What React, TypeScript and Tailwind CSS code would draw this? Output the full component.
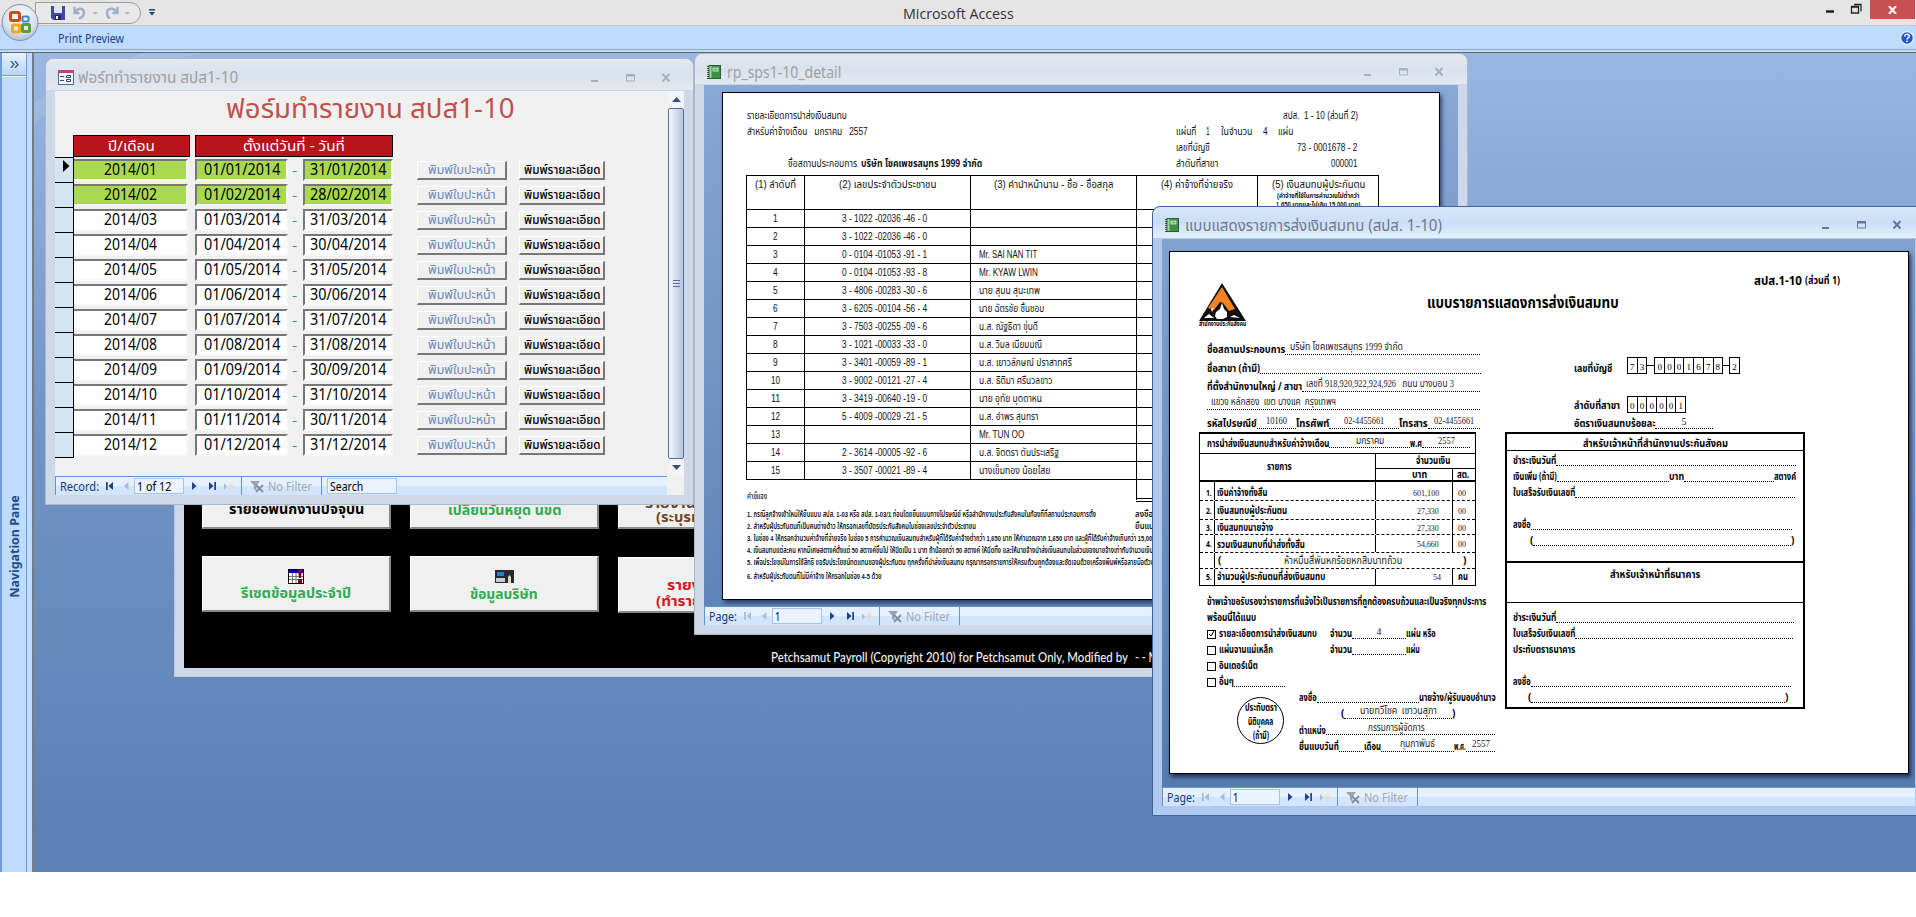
import React, { useLayoutEffect, useRef } from "react";

type Kids = { children?: React.ReactNode; className?: string };

/* Single line of text stretched or condensed to its box's width. */
function Fit({ children, className = "" }: Kids) {
  const inner = useRef<HTMLSpanElement>(null);
  useLayoutEffect(() => {
    const el = inner.current;
    if (!el || !el.parentElement) return;
    const natural = el.offsetWidth;
    const target = el.parentElement.clientWidth;
    if (natural > 0) el.style.transform = `scaleX(${target / natural})`;
  }, [children]);
  return (
    <span className={`flex shrink-0 whitespace-pre leading-none ${className}`}>
      <span ref={inner} className="inline-block shrink-0 origin-left">
        {children}
      </span>
    </span>
  );
}

function Row({ children, className = "h-4" }: Kids) {
  return <div className={`flex shrink-0 items-center ${className}`}>{children}</div>;
}

function Dots({ children, className = "flex-1" }: Kids) {
  return (
    <span
      className={`flex h-[9px] shrink-0 items-center justify-center border-b-[1.500px] border-dotted border-black pb-[5px] font-['Liberation_Serif','Noto_Sans_Thai',serif] text-[10px] font-normal text-[#222] ${className}`}
    >
      {children}
    </span>
  );
}

function WindowButtons({ color }: { color: string }) {
  return (
    <svg width="82" height="14" viewBox="0 0 82 14" fill="none" stroke={color}>
      <path d="M1 10h7" strokeWidth="2" />
      <path d="M36.500 3.500h8v6.500h-8z" />
      <path d="M36 4.500h9" strokeWidth="2" />
      <path d="M72.500 3l7 7.500M79.500 3l-7 7.500" strokeWidth="2" />
    </svg>
  );
}

function ReportIcon() {
  return (
    <svg width="14" height="14" viewBox="0 0 14 14" className="shrink-0">
      <rect x="2" y="0.500" width="11.500" height="13" fill="#3f9148" stroke="#285f31" />
      <rect x="2.500" y="1" width="2" height="12" fill="#9fd39b" />
      <rect x="6" y="3" width="5" height="3" fill="#6fb873" stroke="#d5efd0" strokeWidth=".8" />
      <path d="M1 1v13" stroke="#222" strokeWidth="1.500" strokeDasharray="1 1" />
    </svg>
  );
}

function FormIcon() {
  return (
    <svg width="16" height="15" viewBox="0 0 16 15" className="shrink-0">
      <rect x="0.500" y="0.500" width="15" height="14" fill="#f5f8fd" stroke="#50699c" />
      <rect x="0" y="0" width="16" height="3" fill="#b4476b" />
      <path d="M2 6.500h4M2 10.500h4M8.500 5.500h4v2h-4zM8.500 9.500h4v2h-4z" fill="none" stroke="#31456f" />
    </svg>
  );
}

function NavBar({ record = false }: { record?: boolean }) {
  const start = record ? "#1f3f7f" : "#a9bbd8";
  return (
    <div className="flex h-[19px] w-full shrink-0 items-center border-t border-l border-[#6593cf] bg-linear-to-b from-[#e6f1ff] from-50% to-[#d3e5fd] to-50% pl-1 text-[13px] text-[#15397f]">
      {record ? <Fit className="w-[39px]">Record:</Fit> : <Fit className="w-[28px]">Page:</Fit>}
      <svg width="7" height="8" className="ml-[7px]" fill={start}>
        <path d="M0 0h1.700v8H0zM7 0v8L2.500 4z" />
      </svg>
      <svg width="5" height="8" className="ml-[11px]" fill="#a9bbd8">
        <path d="M4.500 0v8L0 4z" />
      </svg>
      <div className="ml-[5px] flex h-[16px] w-[50px] items-center border border-[#a8c3ea] bg-[#eaf3ff] pl-[2px] text-black">
        {record ? <Fit className="w-[34px]">1 of 12</Fit> : <Fit className="w-[5px]">1</Fit>}
      </div>
      <svg width="5" height="8" className="ml-2" fill="#1f3f8f">
        <path d="M0 0v8l4.500-4z" />
      </svg>
      <svg width="7" height="8" className="ml-3" fill="#1f3f8f">
        <path d="M0 0v8l4.500-4zM5.300 0H7v8H5.300z" />
      </svg>
      <svg width="11" height="9" className="ml-2">
        <path d="M0 1v7l3-3.500z" fill="#a9bbd8" />
        <path d="M7 0v9M3.500 4.500h7M4.500 2l5 5M9.500 2l-5 5" stroke="#e4dfbd" />
      </svg>
      <div className="ml-[6px] h-full w-px bg-[#6593cf]" />
      <svg width="14" height="13" viewBox="0 0 14 13" className="ml-[8px]">
        <path d="M0 1h10L6.500 5.500V11L4 9V5.500z" fill="#9aa3b1" />
        <path d="M6 5l7 7M13 5l-7 7" stroke="#848d9c" strokeWidth="1.800" />
      </svg>
      <Fit className="ml-1 w-[44px] text-[#a3a9ad]">No Filter</Fit>
      <div className="ml-[9px] h-full w-px bg-[#6593cf]" />
      {record && (
        <div className="ml-[5px] flex h-[16px] w-[70px] items-center border border-[#a8c3ea] bg-[#eaf3ff] pl-[2px] text-black">
          <Fit className="w-[33px]">Search</Fit>
        </div>
      )}
    </div>
  );
}

function OfficeButton() {
  return (
    <svg width="40" height="42" viewBox="0 0 40 42" className="absolute top-0 left-0 z-10">
      <defs>
        <radialGradient id="orb" cx=".5" cy=".35" r=".7">
          <stop offset="0" stopColor="#ffffff" />
          <stop offset=".6" stopColor="#dbe2ec" />
          <stop offset="1" stopColor="#a9b7ca" />
        </radialGradient>
      </defs>
      <circle cx="20" cy="22.500" r="18" fill="url(#orb)" stroke="#8292ab" />
      <g fill="none" strokeWidth="3">
        <rect x="10.500" y="12.500" width="9" height="8" rx="1.500" stroke="#d9481c" />
        <rect x="22.500" y="16.500" width="6" height="5" rx="1" stroke="#3b8ecb" strokeWidth="2.200" />
        <rect x="12.500" y="25" width="7" height="7" rx="1" stroke="#f3a91f" />
        <rect x="22.500" y="24.500" width="7" height="7" rx="1" stroke="#56a03c" />
      </g>
    </svg>
  );
}

const months = [
  ["2014/01", "01/01/2014", "31/01/2014"],
  ["2014/02", "01/02/2014", "28/02/2014"],
  ["2014/03", "01/03/2014", "31/03/2014"],
  ["2014/04", "01/04/2014", "30/04/2014"],
  ["2014/05", "01/05/2014", "31/05/2014"],
  ["2014/06", "01/06/2014", "30/06/2014"],
  ["2014/07", "01/07/2014", "31/07/2014"],
  ["2014/08", "01/08/2014", "31/08/2014"],
  ["2014/09", "01/09/2014", "30/09/2014"],
  ["2014/10", "01/10/2014", "31/10/2014"],
  ["2014/11", "01/11/2014", "30/11/2014"],
  ["2014/12", "01/12/2014", "31/12/2014"],
];

function Field({ text, green, size, textSize }: { text: string; green: boolean; size: string; textSize: string }) {
  return (
    <div
      className={`flex h-[22px] shrink-0 items-center justify-center border-t-2 border-r-2 border-b-2 border-t-[#777] border-r-[#f8f8f8] border-b-[#f8f8f8] border-l-[#777] ${size} ${green ? "bg-[#a8d94f]" : "bg-white"}`}
    >
      <Fit className={`text-[15.500px] text-black ${textSize}`}>{text}</Fit>
    </div>
  );
}

const raised = "border-t border-l border-r-2 border-b-2 border-t-white border-l-white border-r-[#777] border-b-[#777] bg-[#f0f0f0]";

function FormWindow() {
  return (
    <section className="absolute top-[5px] left-[11px] flex h-[447px] w-[649px] flex-col rounded-t-lg border border-[#aab8ca] bg-[#cdd9e8] text-[13px]">
      <div className="flex h-[32px] shrink-0 items-center rounded-t-lg border-b border-[#c3d9ea] bg-linear-to-b from-[#e4e9f0] via-[#d9e1ec] to-[#e3e8ef] pt-[5px] pl-[12px]">
        <FormIcon />
        <Fit className="ml-1 w-[160px] text-[16px] text-[#a0a0a0]">ฟอร์ททำรายงาน สปส1-10</Fit>
        <div className="ml-[352px] pt-px">
          <WindowButtons color="#a9b0ba" />
        </div>
      </div>
      <div className="mx-[9px] flex h-[385px] shrink-0 bg-[#f0f0f0]">
        <div className="flex w-[614px] flex-col">
          <Row className="h-[44px] pb-[11px] pl-[171px]">
            <Fit className="w-[289px] text-[27px] text-[#c0504d]">ฟอร์มทำรายงาน สปส1-10</Fit>
          </Row>
          <div className="flex h-[22px] shrink-0 pl-[18px] text-[14px] text-white">
            <div className="flex w-[117px] items-center justify-center border border-black bg-[#b91419]">
              <Fit className="w-[47px]">ปี/เดือน</Fit>
            </div>
            <div className="ml-[5px] flex w-[198px] items-center justify-center border border-black bg-[#b91419]">
              <Fit className="w-[102px]">ตั้งแต่วันที่ - วันที่</Fit>
            </div>
          </div>
          {months.map(([m, a, b], i) => (
            <div key={m} className="flex h-[25px] shrink-0">
              <div className="flex w-[19px] items-start border-t border-r border-black bg-[#d5e4f2] pt-[2px] pl-[8px]">
                {i === 0 && (
                  <svg width="7" height="12">
                    <path d="M0 0v12l6.500-6z" />
                  </svg>
                )}
              </div>
              <div className="flex items-center pt-px">
                <Field text={m} green={i < 2} size="w-[114px]" textSize="w-[53px]" />
                <Field text={a} green={i < 2} size="ml-[7px] w-[93px] border-l-2" textSize="w-[76px]" />
                <Fit className="ml-[4px] w-[5px] text-[#35a355]">-</Fit>
                <Field text={b} green={i < 2} size="ml-[6px] w-[90px] border-l-2" textSize="w-[76px]" />
                <div className={`ml-[24px] flex h-[19px] w-[90px] items-center justify-center ${raised}`}>
                  <Fit className="w-[68px] text-[#6a88bb]">พิมพ์ใบปะหน้า</Fit>
                </div>
                <div className={`ml-[12px] flex h-[19px] w-[86px] items-center justify-center ${raised}`}>
                  <Fit className="w-[76px] font-medium text-black">พิมพ์รายละเอียด</Fit>
                </div>
              </div>
            </div>
          ))}
          <div className="h-px w-[19px] bg-black" />
        </div>
        <div className="flex w-[16px] flex-col bg-[#f3f4f6]">
          <div className="flex h-[17px] items-center justify-center">
            <svg width="9" height="5" fill="#3d4d75">
              <path d="M0 5l4.500-5L9 5z" />
            </svg>
          </div>
          <div className="flex h-[351px] items-center justify-center rounded-xs border border-[#5a6c96] bg-linear-to-r from-[#f4f8fd] to-[#b7c6de]">
            <svg width="7" height="7" stroke="#5a6c96">
              <path d="M0 .5h7M0 3.500h7M0 6.500h7" />
            </svg>
          </div>
          <div className="flex h-[17px] items-center justify-center">
            <svg width="9" height="5" fill="#3d4d75">
              <path d="M0 0l4.500 5L9 0z" />
            </svg>
          </div>
        </div>
      </div>
      <div className="mx-[9px] flex bg-[#f0f0f0] pr-[17px]">
        <NavBar record />
      </div>
    </section>
  );
}

const menuBtn = "flex h-[56px] w-[189px] shrink-0 flex-col items-center border-t border-l border-r-2 border-b-2 border-t-white border-l-white border-r-[#888] border-b-[#888] bg-[#f0f0f0]";

function MenuWindow() {
  return (
    <section className="absolute top-[347px] left-[140px] h-[277px] w-[1100px] border border-[#b9c6d6] bg-[#cdd9e8] px-[9px] text-[14px] font-bold">
      <div className="flex h-[267px] flex-col overflow-hidden bg-black pt-[72px] pl-[18px]">
        <div className="flex gap-[19px]">
          <div className={`${menuBtn} pt-[28px]`}>
            <Fit className="w-[135px] text-black">รายชื่อพนักงานปัจจุบัน</Fit>
          </div>
          <div className={`${menuBtn} pt-[29px]`}>
            <Fit className="w-[113px] text-[#2fab50]">เปลี่ยนวันหยุด นขต</Fit>
          </div>
          <div className={`${menuBtn} pt-[22px] text-[#6d4528]`}>
            <Fit className="w-[134px]">รายงานประกันสังคม</Fit>
            <Fit className="w-[112px]">(ระบุรหัสพนักงาน)</Fit>
          </div>
        </div>
        <div className="mt-[27px] flex gap-[19px]">
          <div className={`${menuBtn} pt-[12px]`}>
            <svg width="16" height="15" viewBox="0 0 16 15">
              <rect x=".5" y=".5" width="15" height="14" fill="#fff" stroke="#000" />
              <rect x="1" y="1" width="14" height="3" fill="#00c" />
              <path d="M1 7.500h14M1 10.500h14M4.500 4v10M8 4v10" stroke="#777" />
              <path d="M10 0h4l-1 9h-2zM10 10h4v4h-4z" fill="#800010" />
            </svg>
            <Fit className="mt-[2px] w-[110px] text-[#2fab50]">รีเซตข้อมูลประจำปี</Fit>
          </div>
          <div className={`${menuBtn} pt-[13px]`}>
            <svg width="21" height="14" viewBox="0 0 21 14">
              <rect x="1" y="0" width="19" height="13" fill="#262a33" />
              <rect x="3" y="2" width="7" height="4" fill="#2d7fc4" />
              <rect x="2" y="8" width="9" height="4" fill="#c6ccd4" />
              <path d="M14 13V7l1.500-2L17 7v6z" fill="#e8d3bd" />
            </svg>
            <Fit className="mt-[3px] w-[68px] text-[#2fab50]">ข้อมูลบริษัท</Fit>
          </div>
          <div className={`${menuBtn} mt-px pt-[20px] text-[#e3121b]`}>
            <Fit className="w-[90px]">รายงานประจำ</Fit>
            <Fit className="mt-[2px] w-[112px]">(ทำรายงาน สปส.)</Fit>
          </div>
        </div>
        <Row className="mt-[35px] h-[18px] pl-[569px] font-['Lato',sans-serif] font-medium text-[#f2f2f2]">
          <Fit className="w-[357px]">Petchsamut Payroll (Copyright 2010) for Petchsamut Only, Modified by</Fit>
          <Fit className="ml-[7px] w-[24px]">- - M</Fit>
        </Row>
      </div>
    </section>
  );
}

const insured = [
  ["3 - 1022 -02036 -46 - 0", "", ""],
  ["3 - 1022 -02036 -46 - 0", "", ""],
  ["0 - 0104 -01053 -91 - 1", "Mr. SAI NAN TIT", "w-[58px]"],
  ["0 - 0104 -01053 -93 - 8", "Mr. KYAW LWIN", "w-[59px]"],
  ["3 - 4806 -00283 -30 - 6", "นาย สุมน สุนะเทพ", "w-[61px]"],
  ["3 - 6205 -00104 -56 - 4", "นาย ฉัตรชัย ชื่นชอบ", "w-[65px]"],
  ["3 - 7503 -00255 -09 - 6", "น.ส. ณัฐธิดา ขุ่นดี", "w-[59px]"],
  ["3 - 1021 -00033 -33 - 0", "น.ส. วิมล เนียมมณี", "w-[63px]"],
  ["3 - 3401 -00059 -89 - 1", "น.ส. เยาวลักษณ์ ปราสาทศรี", "w-[93px]"],
  ["3 - 9002 -00121 -27 - 4", "น.ส. ธิติมา ศรีนวลขาว", "w-[73px]"],
  ["3 - 3419 -00640 -19 - 0", "นาย อุทัย บุตดาหน", "w-[63px]"],
  ["5 - 4009 -00029 -21 - 5", "น.ส. อำพร สุนทรา", "w-[59px]"],
  ["", "Mr. TUN OO", "w-[45px]"],
  ["2 - 3614 -00005 -92 - 6", "น.ส. จิตตรา ตันประเสริฐ", "w-[80px]"],
  ["3 - 3507 -00021 -89 - 4", "นางเข็มทอง น้อยไสย", "w-[71px]"],
];

function DetailWindow() {
  return (
    <section className="absolute top-0 left-[660px] flex h-[582px] w-[774px] flex-col rounded-t-lg border border-[#aab8ca] bg-[#cdd9e8]">
      <div className="flex h-[31px] shrink-0 items-center rounded-t-lg border-b border-[#c3d9ea] bg-linear-to-b from-[#e4e9f0] via-[#d9e1ec] to-[#e3e8ef] pt-[6px] pl-[12px]">
        <ReportIcon />
        <Fit className="ml-[6px] w-[114px] text-[16px] text-[#a0a0a0]">rp_sps1-10_detail</Fit>
        <div className="ml-[522px]">
          <WindowButtons color="#a9b0ba" />
        </div>
      </div>
      <div className="mx-[9px] h-[521px] shrink-0 bg-linear-to-b from-[#88a8d5] to-[#6084b8] pt-[7px] pl-[18px]">
        <div className="h-[508px] w-[718px] border border-black bg-white pt-[15px] pl-[24px] font-['Liberation_Sans','Noto_Sans_Thai',sans-serif] text-[10px] text-[#111] shadow-[2px_3px_4px_rgba(20,35,70,0.7)]">
          <Row>
            <Fit className="w-[100px]">รายละเอียดการนำส่งเงินสมทบ</Fit>
            <Fit className="ml-[436px] w-[75px]">สปส.  1 - 10 (ส่วนที่ 2)</Fit>
          </Row>
          <Row>
            <Fit className="w-[121px]">สำหรับค่าจ้างเดือน   มกราคม   2557</Fit>
            <Fit className="ml-[308px] w-[20px]">แผ่นที่</Fit>
            <Fit className="ml-[10px] w-[4px]">1</Fit>
            <Fit className="ml-[11px] w-[32px]">ในจำนวน</Fit>
            <Fit className="ml-[10px] w-[5px]">4</Fit>
            <Fit className="ml-[10px] w-[15px]">แผ่น</Fit>
          </Row>
          <Row>
            <Fit className="ml-[429px] w-[34px]">เลขที่บัญชี</Fit>
            <Fit className="ml-[87px] w-[60px]">73 - 0001678 - 2</Fit>
          </Row>
          <Row>
            <Fit className="ml-[41px] w-[69px]">ชื่อสถานประกอบการ</Fit>
            <Fit className="ml-[4px] w-[121px] font-bold">บริษัท โชคเพชรสมุทร 1999 จำกัด</Fit>
            <Fit className="ml-[194px] w-[42px]">ลำดับที่สาขา</Fit>
            <Fit className="ml-[113px] w-[26px]">000001</Fit>
          </Row>
          <table className="mt-[3px] -ml-px w-[633px] table-fixed border-collapse text-center [&_td]:border [&_td]:border-black [&_td]:p-0 [&_th]:border [&_th]:border-black [&_th]:p-0 [&_th]:pt-[4px] [&_th]:align-top [&_th]:font-normal">
            <colgroup>
              <col className="w-[58px]" />
              <col className="w-[166px]" />
              <col className="w-[166px]" />
              <col className="w-[121px]" />
              <col className="w-[121px]" />
            </colgroup>
            <thead>
              <tr className="h-[34px]">
                <th><Fit className="mx-auto w-[41px]">(1) ลำดับที่</Fit></th>
                <th><Fit className="mx-auto w-[98px]">(2) เลขประจำตัวประชาชน</Fit></th>
                <th><Fit className="mx-auto w-[119px]">(3) คำนำหน้านาม - ชื่อ - ชื่อสกุล</Fit></th>
                <th><Fit className="mx-auto w-[72px]">(4) ค่าจ้างที่จ่ายจริง</Fit></th>
                <th>
                  <Fit className="mx-auto w-[93px]">(5) เงินสมทบผู้ประกันตน</Fit>
                  <Fit className="mx-auto mt-[2px] w-[82px] text-[7px] font-bold">(ค่าจ้างที่ใช้ในการคำนวณไม่ต่ำกว่า</Fit>
                  <Fit className="mx-auto mt-[2px] w-[84px] text-[7px] font-bold">1,650 บาทและไม่เกิน 15,000 บาท)</Fit>
                </th>
              </tr>
            </thead>
            <tbody>
              {insured.map(([id, name, w], i) => (
                <tr key={i} className="h-[18px]">
                  <td>
                    <Fit className={`mx-auto ${i < 9 ? "w-[5px]" : "w-[9px]"}`}>{String(i + 1)}</Fit>
                  </td>
                  <td>{id && <Fit className="ml-[37px] w-[85px]">{id}</Fit>}</td>
                  <td>{name && <Fit className={`ml-[8px] ${w}`}>{name}</Fit>}</td>
                  <td />
                  <td />
                </tr>
              ))}
            </tbody>
          </table>
          <div className="flex h-[26px]">
            <Fit className="w-[20px] pt-[13px] text-[8px] font-medium">คำชี้แจง</Fit>
            <div className="ml-[369px] h-[22px] w-[243px] border-b-4 border-l border-double border-black" />
          </div>
          <div className="flex flex-col text-[8px] font-semibold">
            <Row className="h-3 pt-[6px]">
              <Fit className="w-[349px]">1. กรณีลูกจ้างเข้าใหม่ให้ยื่นแบบ สปส. 1-03 หรือ สปส. 1-03/1 ก่อนโดยยื่นแบบทางไปรษณีย์ หรือสำนักงานประกันสังคมในท้องที่ที่สถานประกอบการตั้ง</Fit>
              <Fit className="ml-[39px] w-[60px]">ลงชื่อ...................</Fit>
            </Row>
            <Row className="h-3 pt-[6px]">
              <Fit className="w-[229px]">2. สำหรับผู้ประกันตนที่เป็นคนต่างด้าว ให้กรอกเลขที่บัตรประกันสังคมในช่องเลขประจำตัวประชาชน</Fit>
              <Fit className="ml-[159px] w-[60px]">ยื่นแบบวันที่...........</Fit>
            </Row>
            <Row className="h-3 pt-[6px]">
              <Fit className="w-[420px]">3. ในช่อง 4 ให้กรอกจำนวนค่าจ้างที่จ่ายจริง ในช่อง 5 การคำนวณเงินสมทบสำหรับผู้ที่ได้รับค่าจ้างต่ำกว่า 1,650 บาท ให้คำนวณจาก 1,650 บาท และผู้ที่ได้รับค่าจ้างเกินกว่า 15,000 บาท</Fit>
            </Row>
            <Row className="h-3 pt-[6px]">
              <Fit className="w-[420px]">4. เงินสมทบแต่ละคน หากมีเศษสตางค์ตั้งแต่ 50 สตางค์ขึ้นไป ให้ปัดเป็น 1 บาท ถ้าน้อยกว่า 50 สตางค์ ให้ปัดทิ้ง และให้นายจ้างนำส่งเงินสมทบในส่วนของนายจ้างเท่ากับจำนวนเงินสมทบ</Fit>
            </Row>
            <Row className="h-3 pt-[6px]">
              <Fit className="w-[420px]">5. เพื่อประโยชน์ในการใช้สิทธิ ขอรับประโยชน์ทดแทนของผู้ประกันตน ทุกครั้งที่นำส่งเงินสมทบ กรุณากรอกรายการให้ครบถ้วนถูกต้องและชัดเจนด้วยเครื่องพิมพ์หรือลายมือตัวบรรจง</Fit>
            </Row>
            <Row className="h-[13px] pt-[8px]">
              <Fit className="w-[135px]">6. สำหรับผู้ประกันตนที่ไม่มีค่าจ้าง ให้กรอกในช่อง 4-5 ด้วย</Fit>
            </Row>
          </div>
        </div>
      </div>
      <div className="mx-[9px] flex">
        <NavBar />
      </div>
    </section>
  );
}

function Digits({ text }: { text: string }) {
  return (
    <div className="flex pl-px">
      {text.split("").map((d, i) => (
        <span
          key={i}
          className="-ml-px flex h-[17px] w-[10.700px] items-center justify-center border border-t-[1.500px] border-black pt-[3px] font-['Liberation_Serif',serif] text-[9px] leading-none font-normal"
        >
          {d}
        </span>
      ))}
    </div>
  );
}

function Check({ on = false }: { on?: boolean }) {
  return (
    <span className="mr-[3px] flex h-[9px] w-[9px] shrink-0 border-[1.500px] border-black">
      {on && (
        <svg width="6" height="6" stroke="#000" fill="none">
          <path d="M1 3l2 2L6 0" />
        </svg>
      )}
    </span>
  );
}

const amounts = [
  ["1.", "เงินค่าจ้างทั้งสิ้น", "w-[50px]", "601,100", "w-[26px]", "h-[18px] pt-[4px]"],
  ["2.", "เงินสมทบผู้ประกันตน", "w-[70px]", "27,330", "w-[22px]", "h-[18px] pt-[2px]"],
  ["3.", "เงินสมทบนายจ้าง", "w-[56px]", "27,330", "w-[22px]", "h-[14px] pt-[2px]"],
  ["4.", "รวมเงินสมทบที่นำส่งทั้งสิ้น", "w-[88px]", "54,660", "w-[22px]", "h-[17px] pt-[2px]"],
];
const serif = "font-['Liberation_Serif','Noto_Sans_Thai',serif] font-normal text-[#222]";

function SummaryTable() {
  return (
    <div className="-ml-[8px] flex h-[154px] w-[277px] shrink-0 flex-col border border-t-2 border-black">
      <div className="flex h-[20px] shrink-0 items-center border-b border-black pl-[7px]">
        <Fit className="w-[122px]">การนำส่งเงินสมทบสำหรับค่าจ้างเดือน</Fit>
        <Dots className="w-[81px]"><Fit className="w-[28px]">มกราคม</Fit></Dots>
        <Fit className="w-[12px]">พ.ศ</Fit>
        <Dots className="w-[48px]"><Fit className="w-[17px]">2557</Fit></Dots>
      </div>
      <div className="flex h-[28px] shrink-0 border-b-2 border-black">
        <div className="flex w-[176px] items-center justify-center border-r border-black">
          <Fit className="-ml-[16px] w-[25px]">รายการ</Fit>
        </div>
        <div className="flex flex-1 flex-col">
          <div className="flex h-[15px] items-center justify-center border-b border-black">
            <Fit className="ml-[14px] w-[34px]">จำนวนเงิน</Fit>
          </div>
          <div className="flex flex-1 items-center">
            <div className="flex h-full w-[77px] items-center justify-center border-r border-black pl-[10px]">
              <Fit className="w-[15px]">บาท</Fit>
            </div>
            <Fit className="ml-[4px] w-[12px]">สต.</Fit>
          </div>
        </div>
      </div>
      {amounts.map(([n, label, w, v, vw, h]) => (
        <div key={n} className="flex shrink-0 border-b border-dashed border-black">
          <div className={`flex w-[15px] items-center justify-end border-r border-black pr-[2px] ${h}`}>
            <Fit className="w-[6px] text-[9px]">{n}</Fit>
          </div>
          <div className={`flex w-[161px] items-center border-r border-black pl-[2px] ${h}`}>
            <Fit className={w}>{label}</Fit>
          </div>
          <div className={`flex w-[77px] items-center justify-end border-r border-black pr-[13px] text-[9px] ${serif} ${h}`}>
            <Fit className={vw}>{v}</Fit>
          </div>
          <div className={`flex items-center pl-[5px] text-[9px] ${serif} ${h}`}>
            <Fit className="w-[8px]">00</Fit>
          </div>
        </div>
      ))}
      <div className="flex h-[16px] shrink-0 border-b border-dashed border-black">
        <div className="w-[15px] border-r border-black" />
        <div className="flex items-center pl-[3px]">
          <Fit className="w-[3px]">(</Fit>
          <Fit className={`ml-[63px] w-[118px] text-[10px] ${serif}`}>ห้าหมื่นสี่พันหกร้อยหกสิบบาทถ้วน</Fit>
          <Fit className="ml-[61px] w-[3px]">)</Fit>
        </div>
      </div>
      <div className="flex flex-1">
        <div className="flex w-[15px] items-center justify-end border-r border-black pr-[2px]">
          <Fit className="w-[6px] text-[9px]">5.</Fit>
        </div>
        <div className="flex w-[161px] items-center border-r border-black pl-[2px]">
          <Fit className="w-[108px]">จำนวนผู้ประกันตนที่ส่งเงินสมทบ</Fit>
        </div>
        <div className={`flex w-[77px] items-center justify-end border-r border-black pr-[11px] text-[9px] ${serif}`}>
          <Fit className="w-[8px]">54</Fit>
        </div>
        <div className="flex items-center pl-[5px]">
          <Fit className="w-[10px]">คน</Fit>
        </div>
      </div>
    </div>
  );
}

function OfficerTable() {
  return (
    <div className="flex h-[277px] w-[300px] shrink-0 flex-col border-2 border-black [&_.sec]:pl-[6px]">
      <div className="flex h-[17px] items-center justify-center border-b border-black">
        <Fit className="w-[145px] pt-[3px]">สำหรับเจ้าหน้าที่สำนักงานประกันสังคม</Fit>
      </div>
      <div className="sec h-[112px] border-b-2 border-black pt-[2px]">
        <Row><Fit className="w-[43px]">ชำระเงินวันที่</Fit><Dots className="w-[240px]" /></Row>
        <Row>
          <Fit className="w-[44px]">เงินเพิ่ม (ถ้ามี)</Fit>
          <Dots className="w-[112px]" />
          <Fit className="w-[15px]">บาท</Fit>
          <Dots className="w-[90px]" />
          <Fit className="w-[22px]">สตางค์</Fit>
        </Row>
        <Row><Fit className="w-[62px]">ใบเสร็จรับเงินเลขที่</Fit><Dots className="w-[220px]" /></Row>
        <Row className="mt-4 h-4"><Fit className="w-[18px]">ลงชื่อ</Fit><Dots className="w-[261px]" /></Row>
        <Row className="h-4 pl-[17px]">
          <Fit className="w-[3px]">(</Fit><Dots className="w-[258px]" /><Fit className="w-[3px]">)</Fit>
        </Row>
      </div>
      <div className="flex h-[40px] justify-center border-b border-black pt-[7px]">
        <Fit className="w-[90px]">สำหรับเจ้าหน้าที่ธนาคาร</Fit>
      </div>
      <div className="sec pt-[7px]">
        <Row><Fit className="w-[43px]">ชำระเงินวันที่</Fit><Dots className="w-[238px]" /></Row>
        <Row><Fit className="w-[62px]">ใบเสร็จรับเงินเลขที่</Fit><Dots className="w-[218px]" /></Row>
        <Row><Fit className="w-[62px]">ประทับตราธนาคาร</Fit></Row>
        <Row className="mt-4 h-4"><Fit className="w-[18px]">ลงชื่อ</Fit><Dots className="w-[260px]" /></Row>
        <Row className="h-4 pl-[15px]">
          <Fit className="w-[3px]">(</Fit><Dots className="w-[254px]" /><Fit className="w-[3px]">)</Fit>
        </Row>
      </div>
    </div>
  );
}

function SummaryWindow() {
  return (
    <section className="absolute top-[153px] left-[1118px] flex h-[610px] w-[773px] flex-col rounded-tl-lg border border-[#3f639e] bg-[#b0c9ef]">
      <div className="flex h-[32px] shrink-0 items-center rounded-tl-lg border-b border-[#a9cfe8] bg-linear-to-b from-[#d8e7fa] via-[#cbdef7] to-[#e4effc] pt-[5px] pl-[12px]">
        <ReportIcon />
        <Fit className="ml-[6px] w-[257px] text-[16px] text-[#6c7a90]">แบบแสดงรายการส่งเงินสมทบ (สปส. 1-10)</Fit>
        <div className="ml-[379px]">
          <WindowButtons color="#66779a" />
        </div>
      </div>
      <div className="mx-[9px] h-[548px] shrink-0 bg-linear-to-b from-[#82a3d0] to-[#557bb0] pt-[12px] pl-[7px]">
        <div className="h-[523px] w-[740px] border border-black bg-white font-['Noto_Sans_Thai','Noto_Sans',sans-serif] text-[10px] font-bold text-black shadow-[2px_3px_4px_rgba(15,30,65,0.8)]">
          <div className="flex h-[88px] items-start pt-[21px] pl-[29px]">
            <div className="flex w-[47px] flex-col items-center pt-[10px]">
              <svg width="47" height="38" viewBox="0 0 47 38">
                <path d="M23 0L47 38H0z" fill="#111" />
                <path d="M23 4l13 22-6 2-6-8-3-1-6 8-6-2z" fill="#f58220" />
                <path d="M23 20l2 6 3 3v5l-4 2h-6l-2-3 1-4 4-3z" fill="#fff" />
                <path d="M5 35l5-4 5 4zM31 34l4-2 6 3zM12 26l3-1-2 4z" fill="#fff" />
              </svg>
              <Fit className="w-[47px] text-[7px]">สำนักงานประกันสังคม</Fit>
            </div>
            <Row className="mt-[22px] ml-[181px] h-4">
              <Fit className="w-[192px] text-[15px]">แบบรายการแสดงการส่งเงินสมทบ</Fit>
            </Row>
            <Row className="ml-[135px] h-4">
              <Fit className="w-[48px] text-[12px]">สปส.1-10</Fit>
              <Fit className="ml-[3px] w-[35px]">(ส่วนที่ 1)</Fit>
            </Row>
          </div>
          <div className="flex">
            <div className="flex w-[335px] shrink-0 flex-col pl-[37px]">
              <Row className="h-[20px]">
                <Fit className="w-[78px]">ชื่อสถานประกอบการ</Fit>
                <Dots className="w-[195px] justify-start! pl-[5px]"><Fit className="w-[113px]">บริษัท โชคเพชรสมุทร 1999 จำกัด</Fit></Dots>
              </Row>
              <Row className="h-[18px]">
                <Fit className="w-[53px]">ชื่อสาขา (ถ้ามี)</Fit>
                <Dots className="w-[221px]" />
              </Row>
              <Row className="h-[18px]">
                <Fit className="w-[95px]">ที่ตั้งสำนักงานใหญ่ / สาขา</Fit>
                <Dots className="w-[178px] justify-start! pl-[4px]"><Fit className="w-[148px]">เลขที่ 918,920,922,924,926   ถนน บางบอน 3</Fit></Dots>
              </Row>
              <Row className="h-[18px]">
                <Dots className="w-[273px] justify-start! pl-[4px]"><Fit className="w-[125px]">แขวง หลักสอง  เขต บางแค  กรุงเทพฯ</Fit></Dots>
              </Row>
              <Row className="mt-[2px] h-4">
                <Fit className="w-[50px]">รหัสไปรษณีย์</Fit>
                <Dots className="w-[39px]"><Fit className="w-[21px]">10160</Fit></Dots>
                <Fit className="w-[33px]">โทรศัพท์</Fit>
                <Dots className="w-[70px]"><Fit className="w-[40px]">02-4455661</Fit></Dots>
                <Fit className="w-[29px]">โทรสาร</Fit>
                <Dots className="w-[52px]"><Fit className="w-[40px]">02-4455661</Fit></Dots>
              </Row>
              <SummaryTable />
              <Row className="mt-[8px] h-4"><Fit className="w-[279px]">ข้าพเจ้าขอรับรองว่ารายการที่แจ้งไว้เป็นรายการที่ถูกต้องครบถ้วนและเป็นจริงทุกประการ</Fit></Row>
              <Row><Fit className="w-[49px]">พร้อมนี้ได้แนบ</Fit></Row>
              <Row>
                <Check on />
                <Fit className="w-[98px]">รายละเอียดการนำส่งเงินสมทบ</Fit>
                <Fit className="ml-[13px] w-[22px]">จำนวน</Fit>
                <Dots className="w-[54px]">4</Dots>
                <Fit className="w-[30px]">แผ่น หรือ</Fit>
              </Row>
              <Row>
                <Check />
                <Fit className="w-[54px]">แผ่นจานแม่เหล็ก</Fit>
                <Fit className="ml-[57px] w-[22px]">จำนวน</Fit>
                <Dots className="w-[54px]" />
                <Fit className="w-[14px]">แผ่น</Fit>
              </Row>
              <Row><Check /><Fit className="w-[39px]">อินเตอร์เน็ต</Fit></Row>
              <Row><Check /><Fit className="w-[15px]">อื่นๆ</Fit><Dots className="w-[51px]" /></Row>
              <div className="flex">
                <div className="mt-[7px] ml-[30px] flex h-[47px] w-[47px] shrink-0 flex-col items-center gap-[4px] rounded-full border border-black pt-[5px]">
                  <Fit className="w-[32px]">ประทับตรา</Fit>
                  <Fit className="w-[25px]">นิติบุคคล</Fit>
                  <Fit className="w-[16px]">(ถ้ามี)</Fit>
                </div>
                <div className="ml-[15px] flex flex-col">
                  <Row>
                    <Fit className="w-[18px]">ลงชื่อ</Fit><Dots className="w-[102px]" /><Fit className="w-[77px]">นายจ้าง/ผู้รับมอบอำนาจ</Fit>
                  </Row>
                  <Row className="h-4 pl-[42px]">
                    <Fit className="w-[3px]">(</Fit><Dots className="w-[108px]"><Fit className="w-[77px]">นายทวีโชค  เชาวนสุภา</Fit></Dots><Fit className="w-[3px]">)</Fit>
                  </Row>
                  <Row className="h-[17px]">
                    <Fit className="w-[27px]">ตำแหน่ง</Fit><Dots className="w-[169px] pr-[28px]"><Fit className="w-[57px]">กรรมการผู้จัดการ</Fit></Dots>
                  </Row>
                  <Row>
                    <Fit className="w-[40px]">ยื่นแบบวันที่</Fit><Dots className="w-[25px]" /><Fit className="w-[17px]">เดือน</Fit>
                    <Dots className="w-[73px]"><Fit className="w-[35px]">กุมภาพันธ์</Fit></Dots><Fit className="w-[12px]">พ.ศ.</Fit>
                    <Dots className="w-[29px]"><Fit className="w-[18px]">2557</Fit></Dots>
                  </Row>
                </div>
              </div>
            </div>
            <div className="flex flex-col">
              <div className="mt-[17px] flex h-[17px] items-center pl-[69px]">
                <Fit className="w-[38px] pt-[7px]">เลขที่บัญชี</Fit>
                <span className="w-[15px]" />
                <Digits text="73" />
                <span className="h-px w-[7px] bg-black" />
                <Digits text="0001678" />
                <span className="h-px w-[6px] bg-black" />
                <Digits text="2" />
              </div>
              <div className="mt-[22px] flex h-[17px] items-center pl-[69px]">
                <Fit className="w-[46px] pt-[3px]">ลำดับที่สาขา</Fit>
                <span className="w-[7px]" />
                <Digits text="000001" />
              </div>
              <Row className="mt-[3px] h-4 pl-[69px]">
                <Fit className="w-[81px]">อัตราเงินสมทบร้อยละ</Fit>
                <Dots className="w-[58px]">5</Dots>
              </Row>
              <OfficerTable />
            </div>
          </div>
        </div>
      </div>
      <div className="mx-[9px] flex">
        <NavBar />
      </div>
    </section>
  );
}

export default function App() {
  return (
    <div className="flex h-[917px] w-[1916px] flex-col overflow-hidden bg-white font-['Noto_Sans','Noto_Sans_Thai',sans-serif]">
      <header className="relative shrink-0">
        <OfficeButton />
        <div className="flex h-[26px] items-start border-b border-[#c3c6ca] bg-[#e4e4e4]">
          <div className="flex h-[22px] w-[106px] shrink-0 translate-x-[35px] translate-y-[2px] items-center rounded-r-full border border-[#9a9da2] bg-[#e8e8e8] pl-[15px]">
            <svg width="14" height="14" viewBox="0 0 14 14">
              <path d="M0 0h14v14H2l-2-2z" fill="#4347a8" />
              <rect x="3" y="0" width="8" height="7" fill="#dfe5f6" />
              <rect x="4" y="9" width="6" height="5" fill="#22255f" />
              <rect x="5" y="10" width="2" height="3" fill="#fff" />
            </svg>
            <svg width="57" height="14" viewBox="0 0 57 14" className="ml-[8px]" fill="none" stroke="#9fb0c8" strokeWidth="2.500">
              <path d="M1.500 1v6h5M2 6.500C5 1 11 2 11 6.500c0 3-2 5-5 6" />
              <path d="M44.500 1v6h-5M44 6.500C41 1 34 2 34 6.500c0 3 1 5 3 6" />
              <path d="M19 6h6l-3 3zM51 6h6l-3 3z" fill="#b3b7bd" stroke="none" />
            </svg>
          </div>
          <svg width="6" height="7" className="mt-[9px] ml-[43px]" fill="#23417f">
            <path d="M0 0h6v1.500H0zM0 3h6L3 6.500z" />
          </svg>
          <Fit className="mt-[6px] ml-[748px] w-[111px] font-['Open_Sans',sans-serif] text-[15px] text-[#333]">Microsoft Access</Fit>
          <svg width="40" height="16" className="ml-[810px]" fill="none" stroke="#222">
            <path d="M2 11.500h8" strokeWidth="2.500" />
            <path d="M27.500 6.500h7v6.500h-7zM27 7h8M30 4.500h7v7" strokeWidth="1.300" />
          </svg>
          <div className="ml-[6px] flex h-[19px] w-[45px] items-center justify-center bg-[#c75050]">
            <svg width="9" height="8" stroke="#fff" strokeWidth="2">
              <path d="M1 0l7 8M8 0L1 8" />
            </svg>
          </div>
        </div>
        <div className="flex h-[24px] items-center border-b border-[#8ba8cc] bg-[#bfdbff] pl-[58px]">
          <Fit className="w-[66px] pt-[2px] text-[13px] text-[#15428b]">Print Preview</Fit>
          <svg width="14" height="14" viewBox="0 0 14 14" className="ml-[1776px] shrink-0">
            <circle cx="7" cy="7" r="6.300" fill="#2357c5" stroke="#e9f1fd" strokeWidth="1.200" />
            <path d="M4.800 5.500C4.800 2.500 9.300 2.800 9.300 5.200 9.300 6.800 7 6.800 7 8.500M7 9.500v1.500" fill="none" stroke="#fff" strokeWidth="1.500" />
          </svg>
        </div>
        <div className="h-[3px] border-b border-[#606872] bg-[#c7d9ee]" />
      </header>
      <div className="flex h-[819px] shrink-0">
        <aside className="flex w-[34px] shrink-0 border-l-2 border-[#6f9ddb]">
          <div className="flex w-[25px] flex-col border-r border-[#6f9ddb] bg-[#bfdbff]">
            <div className="flex h-[23px] shrink-0 items-center justify-center border-b border-[#6f9ddb] bg-linear-to-b from-[#e6f1ff] to-[#b9d5fb]">
              <svg width="9" height="7" fill="none" stroke="#2b4f8f">
                <path d="M1 0l3 3.500L1 7M5 0l3 3.500L5 7" strokeWidth="1.200" />
              </svg>
            </div>
            <div className="flex h-[102px] items-center justify-center border-t border-white" />
            <div className="mt-[317px] flex h-[103px] items-center justify-center">
              <Fit className="w-[102px] shrink-0 -rotate-90 text-[13px] font-bold text-[#204d89]">Navigation Pane</Fit>
            </div>
          </div>
          <div className="w-[5px] bg-[#bfdbff]" />
          <div className="w-[2px] bg-[#737c88]" />
        </aside>
        <main className="relative flex-1 overflow-hidden bg-linear-to-b from-[#99b7e2] via-[#7294c5] via-45% to-[#5a80b4]">
          <svg width="1882" height="819" className="absolute top-0 left-0" fill="#fff" fillOpacity=".1">
            <path d="M0 70Q60 20 170 0H110Q40 20 0 50z" />
          </svg>
          <MenuWindow />
          <FormWindow />
          <DetailWindow />
          <SummaryWindow />
        </main>
      </div>
    </div>
  );
}
